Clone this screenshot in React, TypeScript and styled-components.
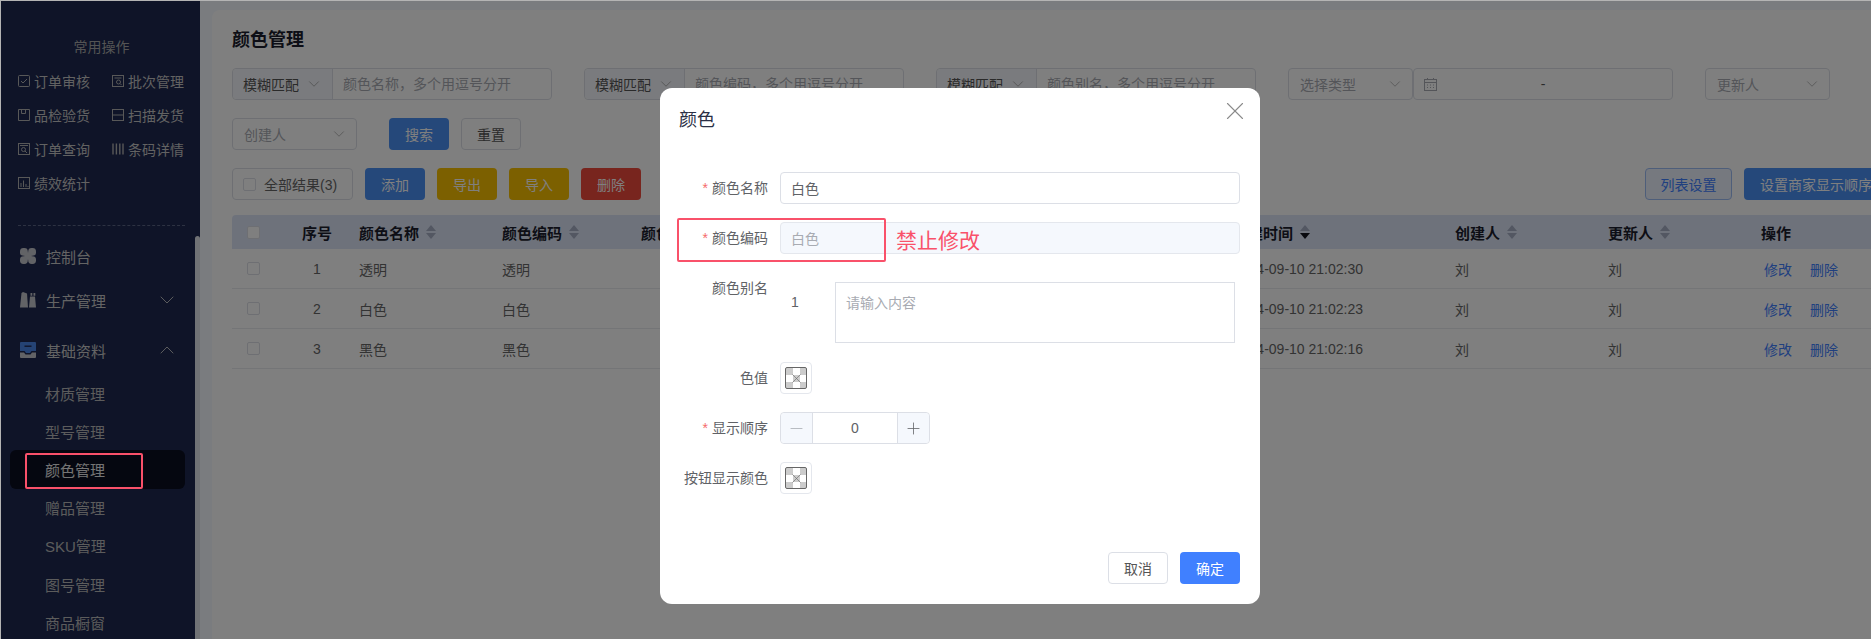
import React from "react";
import styled, { createGlobalStyle } from "styled-components";
import { ChevronDown, ChevronUp, Minus, Plus, X } from "lucide-react";

const GlobalStyle = createGlobalStyle`
  html, body { margin: 0; padding: 0; background: #fff; }
  body { font-family: "Liberation Sans", "Noto Sans CJK SC", sans-serif; font-size: 14px; }
  * { box-sizing: border-box; }
  input, textarea { font: inherit; }
`;

const Frame = styled.div`
  position: relative;
  width: 1871px;
  height: 639px;
  overflow: hidden;
  display: flex;
  background: #f4f8fe;
  &::after {
    content: "";
    position: absolute;
    inset: 0;
    border-top: 1px solid #b4b4b4;
    border-left: 1px solid #b4b4b4;
    z-index: 9;
    pointer-events: none;
  }
`;

/* ---------- sidebar ---------- */
const Sidebar = styled.aside`
  position: relative;
  flex: 0 0 200px;
  height: 639px;
  background: #1e2850;
  overflow: hidden;
  color: #c4c4c4;
`;
const ScrollThumb = styled.div`
  position: absolute;
  right: 0;
  top: 236px;
  bottom: 0;
  width: 5px;
  border-radius: 3px 3px 0 0;
  background: #e0e4ea;
`;
const QuickTitle = styled.div`
  margin: 37px 15px 0 18px;
  height: 20px;
  line-height: 20px;
  text-align: center;
  color: #a8a8a8;
`;
const QuickGrid = styled.div`
  margin: 7px 0 0 18px;
  display: grid;
  grid-template-columns: 94px 80px;
  grid-auto-rows: 34px;
`;
const QuickItem = styled.div`
  display: flex;
  align-items: center;
  gap: 4px;
  white-space: nowrap;
  color: #c4c4c4;
  svg { flex: 0 0 12px; }
`;
const Divider = styled.div`
  margin: 25px 15px 0 18px;
  border-top: 1px dashed #5a6484;
`;
const MenuItem = styled.div<{ $top: number }>`
  margin-top: ${(p) => p.$top}px;
  height: 44px;
  padding: 0 21px 0 20px;
  display: flex;
  align-items: center;
  font-size: 15px;
  color: #c8c8c8;
  svg.lead { margin-right: 10px; flex: 0 0 16px; }
  svg.arrow { margin-left: auto; color: #c8c8c8; }
`;
const SubMenu = styled.div`
  margin-top: 2px;
`;
const SubItem = styled.div<{ $active?: boolean }>`
  margin: 0 10px;
  width: 175px;
  height: 38.2px;
  padding-left: 35px;
  display: flex;
  align-items: center;
  font-size: 15px;
  border-radius: 6px;
  color: ${(p) => (p.$active ? "#e8e8e8" : "#b8b8b8")};
  background: ${(p) => (p.$active ? "#0a0e20" : "transparent")};
`;

/* ---------- main ---------- */
const Main = styled.main`
  flex: 1;
  min-width: 0;
  height: 639px;
  padding: 10px 0 0 12px;
`;
const Card = styled.section`
  height: 629px;
  background: #fff;
  border-radius: 8px 0 0 0;
  padding: 18px 0 0 20px;
  overflow: hidden;
`;
const PageTitle = styled.h1`
  margin: 0 0 16px;
  height: 24px;
  line-height: 24px;
  font-size: 18px;
  font-weight: 700;
  color: #1a1c2c;
`;
const FilterRow = styled.div`
  display: flex;
  height: 32px;
  margin-bottom: 18px;
  gap: 32px;
`;
const InputGroup = styled.div`
  flex: 0 0 320px;
  display: flex;
  height: 32px;
  border: 1px solid #dcdfe6;
  border-radius: 4px;
`;
const Prepend = styled.div`
  flex: 0 0 100px;
  padding: 0 9px 0 10px;
  display: flex;
  align-items: center;
  justify-content: space-between;
  background: #f5f7fc;
  border-right: 1px solid #dcdfe6;
  color: #555;
  border-radius: 4px 0 0 4px;
  svg { color: #999; }
`;
const GroupPlaceholder = styled.div`
  padding-left: 10px;
  line-height: 30px;
  color: #a8abb2;
`;
const Joined = styled.div`
  display: flex;
`;
const SelectBox = styled.div`
  width: 125px;
  height: 32px;
  padding: 0 8px 0 11px;
  display: flex;
  align-items: center;
  justify-content: space-between;
  border: 1px solid #dcdfe6;
  border-radius: 4px;
  color: #a8abb2;
  svg { color: #a0a0a0; }
`;
const DateBox = styled.div`
  position: relative;
  width: 260px;
  height: 32px;
  display: flex;
  align-items: center;
  justify-content: center;
  border: 1px solid #dcdfe6;
  border-radius: 4px;
  color: #555;
  svg { position: absolute; left: 10px; top: 9px; color: #a8abb2; }
`;
const ActionGap = styled.div`
  display: flex;
  gap: 12px;
`;
const Button = styled.button<{ $bg: string; $w?: number }>`
  width: ${(p) => (p.$w ? `${p.$w}px` : "60px")};
  flex: none;
  height: 32px;
  padding: 0;
  border: 0;
  border-radius: 4px;
  background: ${(p) => p.$bg};
  color: #fff;
  font: inherit;
  white-space: nowrap;
`;
const GhostButton = styled.button`
  width: 60px;
  height: 32px;
  padding: 0;
  background: #fff;
  border: 1px solid #dcdfe6;
  border-radius: 4px;
  color: #555;
  font: inherit;
`;
const OutlineButton = styled.button`
  width: 87px;
  height: 32px;
  padding: 0;
  background: #ecf3ff;
  border: 1px solid #9dbcf5;
  border-radius: 4px;
  color: #4080ff;
  font: inherit;
  flex: none;
`;
const Toolbar = styled.div`
  width: 1656px;
  height: 32px;
  display: flex;
  align-items: center;
  gap: 12px;
`;
const ToolRight = styled.div`
  margin-left: auto;
  display: flex;
  gap: 12px;
`;
const SelectAll = styled.div`
  width: 121px;
  height: 32px;
  display: flex;
  align-items: center;
  gap: 8px;
  padding-left: 10px;
  border: 1px solid #dcdfe6;
  border-radius: 4px;
  color: #666;
  white-space: nowrap;
`;
const Check = styled.span`
  display: inline-block;
  width: 13px;
  height: 13px;
  border: 1px solid #dcdfe6;
  border-radius: 2px;
  background: #fff;
  flex: none;
`;
const Table = styled.div`
  margin-top: 15px;
  width: 1700px;
`;
const columns = "55px 60px 143px 139px 592px 222px 153px 153px 183px";
const HeadRow = styled.div`
  display: grid;
  grid-template-columns: ${columns};
  height: 34px;
  background: #dde5f6;
  align-items: center;
  font-size: 15px;
  font-weight: 700;
  color: #1a1c2c;
  border-radius: 4px 0 0 0;
`;
const Row = styled.div`
  display: grid;
  grid-template-columns: ${columns};
  height: 40px;
  align-items: center;
  border-bottom: 1px solid #e8eaef;
  color: #666;
`;
const Cell = styled.div<{ $center?: boolean }>`
  padding-left: ${(p) => (p.$center ? 0 : 12)}px;
  text-align: ${(p) => (p.$center ? "center" : "left")};
  display: flex;
  align-items: center;
  justify-content: ${(p) => (p.$center ? "center" : "flex-start")};
  white-space: nowrap;
`;
const CheckCell = styled.div`
  padding-left: 15px;
  display: flex;
`;
const SortIcon = styled.svg`
  margin-left: 7px;
  flex: none;
`;
const LinkGroup = styled.div`
  display: flex;
  gap: 18px;
  padding-left: 3px;
  color: #4080ff;
`;

/* ---------- dialog ---------- */
const Overlay = styled.div`
  position: absolute;
  inset: 0;
  z-index: 5;
  background: rgba(0, 0, 0, 0.5);
  padding: 88px 0 0 660px;
`;
const Dialog = styled.div`
  width: 600px;
  height: 516px;
  background: #fff;
  border-radius: 12px;
  display: flex;
  flex-direction: column;
`;
const DialogHeader = styled.div`
  height: 84px;
  padding: 20px 19px 0;
  display: flex;
  justify-content: space-between;
`;
const DialogTitle = styled.div`
  font-size: 18px;
  line-height: 24px;
  color: #2a2f45;
`;
const CloseIcon = styled(X)`
  margin: -12px -9px 0 0;
  color: #8a8a8a;
`;
const FormRow = styled.div<{ $tall?: boolean }>`
  display: grid;
  grid-template-columns: 108px 1fr;
  column-gap: 12px;
  padding-right: 20px;
  min-height: ${(p) => (p.$tall ? 72 : 32)}px;
  margin-bottom: 18px;
`;
const Label = styled.label`
  height: 32px;
  line-height: 32px;
  text-align: right;
  color: #606266;
  white-space: nowrap;
`;
const Star = styled.span`
  color: #f56c6c;
  margin-right: 4px;
`;
const TextInput = styled.input`
  width: 100%;
  height: 32px;
  padding: 0 10px;
  border: 1px solid #dcdfe6;
  border-radius: 4px;
  color: #606266;
  outline: none;
  &:disabled {
    background: #f5f8fd;
    color: #a8abb2;
    border-color: #e4e7ed;
  }
`;
const AliasWrap = styled.div`
  display: flex;
  padding-top: 10px;
`;
const AliasIndex = styled.div`
  width: 55px;
  padding: 10px 0 0 11px;
  line-height: 20px;
  color: #606266;
`;
const AliasArea = styled.textarea`
  width: 400px;
  height: 61px;
  padding: 10px 10px;
  border: 1px solid #dcdfe6;
  border-radius: 0;
  line-height: 20px;
  resize: none;
  outline: none;
  &::placeholder { color: #a8abb2; }
`;
const Swatch = styled.div`
  width: 32px;
  height: 32px;
  padding: 4px;
  border: 1px solid #e4e7ed;
  border-radius: 4px;
`;
const SwatchInner = styled.div`
  width: 22px;
  height: 22px;
  border: 1px solid #666;
  border-radius: 2px;
  display: flex;
  align-items: center;
  justify-content: center;
  color: #666;
  background: conic-gradient(#ccc 25%, #fff 0 50%, #ccc 0 75%, #fff 0) 7px 0 / 14px 14px;
`;
const NumberBox = styled.div`
  width: 150px;
  height: 32px;
  display: flex;
  border: 1px solid #dcdfe6;
  border-radius: 4px;
  color: #606266;
`;
const Stepper = styled.div<{ $side: "l" | "r"; $muted?: boolean }>`
  flex: 0 0 32px;
  display: flex;
  align-items: center;
  justify-content: center;
  background: #f5f8fd;
  color: ${(p) => (p.$muted ? "#a8abb2" : "#606266")};
  border-${(p) => (p.$side === "l" ? "right" : "left")}: 1px solid #dcdfe6;
  border-radius: ${(p) => (p.$side === "l" ? "4px 0 0 4px" : "0 4px 4px 0")};
`;
const NumberValue = styled.div`
  flex: 1;
  text-align: center;
  line-height: 30px;
`;
const DialogFooter = styled.div`
  margin-top: auto;
  padding: 0 20px 20px;
  display: flex;
  justify-content: flex-end;
  gap: 12px;
`;

/* ---------- annotations ---------- */
const MenuMark = styled.div`
  position: absolute;
  left: 25px;
  top: 453px;
  width: 118px;
  height: 36px;
  border: 2px solid #f9516a;
  border-radius: 2px;
  z-index: 7;
`;
const FieldMark = styled.div`
  position: absolute;
  left: 677px;
  top: 218px;
  width: 209px;
  height: 44px;
  border: 2px solid #f9516a;
  border-radius: 2px;
  z-index: 7;
`;
const MarkNote = styled.div`
  position: absolute;
  left: 896px;
  top: 225px;
  font-size: 21px;
  line-height: 32px;
  color: #f9516a;
  z-index: 7;
`;

/* ---------- icons ---------- */
const ic = { width: 12, height: 12, viewBox: "0 0 12 12", fill: "none", stroke: "#b0b0b0", strokeWidth: 1 } as const;
const IconCheck = () => (
  <svg {...ic}><rect x=".5" y=".5" width="11" height="11" rx="1" /><path d="M3 6l2 2 4-4" /></svg>
);
const IconBatch = () => (
  <svg {...ic}><rect x=".5" y=".5" width="11" height="11" /><path d="M2.500 3h7" /><circle cx="6.500" cy="7" r="2" /><path d="M8 8.500l1.500 1.500" /></svg>
);
const IconBox = () => (
  <svg {...ic}><path d="M.5.500v11h11V.500zM3.500.500v4h4v-4" /></svg>
);
const IconScan = () => (
  <svg {...ic}><rect x=".5" y=".5" width="11" height="11" /><path d="M0 6h12" /></svg>
);
const IconQuery = () => (
  <svg {...ic}><rect x=".5" y=".5" width="11" height="11" /><path d="M2 2.500h8" /><circle cx="5.500" cy="6.500" r="2" /><path d="M7 8l2 2" /></svg>
);
const IconBars = () => (
  <svg {...ic} strokeWidth={1.4}><path d="M1 .5v11M4.400 .5v11M7.800 .5v11M11 .5v11" /></svg>
);
const IconStats = () => (
  <svg {...ic}><rect x=".5" y=".5" width="11" height="11" /><path d="M3 10V6M5.500 10V3.500M8 10V7M10 10V9" /></svg>
);
const IconClover = () => (
  <svg className="lead" width="16" height="16" viewBox="0 0 16 16" fill="#c4c6cc">
    <rect x="0" y="0" width="7.800" height="7.800" rx="3.400" />
    <rect x="8.200" y="0" width="7.800" height="7.800" rx="3.400" />
    <rect x="0" y="8.200" width="7.800" height="7.800" rx="3.400" />
    <rect x="8.200" y="8.200" width="7.800" height="7.800" rx="3.400" />
    <rect x="5" y="5" width="6" height="6" transform="rotate(45 8 8)" />
  </svg>
);
const IconBooks = () => (
  <svg className="lead" width="16" height="16" viewBox="0 0 16 16" fill="#c4c6cc">
    <path d="M0 15.500L1.500 1 3 0l4 1.500 1 14z" />
    <path d="M9 15.500L10 4.500h5l1 11zM10.500 3.800V1h1.800v2.800zM13.500 3.800V1h1.800v2.800z" />
  </svg>
);
const IconTray = () => (
  <svg className="lead" width="16" height="16" viewBox="0 0 16 16">
    <path d="M1 0h14a1 1 0 011 1v8h-4.500L10 11H6L4.500 9H0V1a1 1 0 011-1z" fill="#4a86e8" />
    <rect x="4.500" y="3.500" width="7" height="1.400" fill="#1e2850" />
    <path d="M0 10.500h4l1.500 2h5l1.500-2h4V15a1 1 0 01-1 1H1a1 1 0 01-1-1z" fill="#c4c6cc" />
  </svg>
);
const IconCalendar = () => (
  <svg width="13" height="13" viewBox="0 0 13 13" fill="none" stroke="currentColor">
    <rect x=".5" y="1.500" width="12" height="11" />
    <path d="M.5 4.500h12M3.500 0v2M9.500 0v2M3 7h1M6 7h1M9 7h1M3 9.500h1M6 9.500h1M9 9.500h1" />
  </svg>
);
const Sort = ({ active }: { active?: boolean }) => (
  <SortIcon width="10" height="14" viewBox="0 0 10 14">
    <path d="M5 0l5 6H0z" fill="#a6aec4" />
    <path d="M5 14l5-6H0z" fill={active ? "#12141f" : "#a6aec4"} />
  </SortIcon>
);

const quick: [React.ReactNode, string][] = [
  [<IconCheck />, "订单审核"],
  [<IconBatch />, "批次管理"],
  [<IconBox />, "品检验货"],
  [<IconScan />, "扫描发货"],
  [<IconQuery />, "订单查询"],
  [<IconBars />, "条码详情"],
  [<IconStats />, "绩效统计"],
];
const subs = ["材质管理", "型号管理", "颜色管理", "赠品管理", "SKU管理", "图号管理", "商品橱窗"];
const rows = [
  ["1", "透明", "2024-09-10 21:02:30"],
  ["2", "白色", "2024-09-10 21:02:23"],
  ["3", "黑色", "2024-09-10 21:02:16"],
];
const chevron = { size: 18, strokeWidth: 1 };

const SwatchControl = () => (
  <Swatch>
    <SwatchInner><X size={15} strokeWidth={1} /></SwatchInner>
  </Swatch>
);

export default function App() {
  return (
    <Frame>
      <GlobalStyle />
      <Sidebar>
        <QuickTitle>常用操作</QuickTitle>
        <QuickGrid>
          {quick.map(([icon, text]) => (
            <QuickItem key={text}>{icon}{text}</QuickItem>
          ))}
        </QuickGrid>
        <Divider />
        <MenuItem $top={8}><IconClover />控制台</MenuItem>
        <MenuItem $top={0}><IconBooks />生产管理<ChevronDown className="arrow" size={24} strokeWidth={0.9} /></MenuItem>
        <MenuItem $top={6}><IconTray />基础资料<ChevronUp className="arrow" size={24} strokeWidth={0.9} /></MenuItem>
        <SubMenu>
          {subs.map((s) => (
            <SubItem key={s} $active={s === "颜色管理"}>{s}</SubItem>
          ))}
        </SubMenu>
        <ScrollThumb />
      </Sidebar>
      <Main>
        <Card>
          <PageTitle>颜色管理</PageTitle>
          <FilterRow>
            {["颜色名称", "颜色编码", "颜色别名"].map((n) => (
              <InputGroup key={n}>
                <Prepend>模糊匹配<ChevronDown {...chevron} /></Prepend>
                <GroupPlaceholder>{n}，多个用逗号分开</GroupPlaceholder>
              </InputGroup>
            ))}
            <Joined>
              <SelectBox>选择类型<ChevronDown {...chevron} /></SelectBox>
              <DateBox><IconCalendar />-</DateBox>
            </Joined>
            <SelectBox>更新人<ChevronDown {...chevron} /></SelectBox>
          </FilterRow>
          <FilterRow>
            <SelectBox>创建人<ChevronDown {...chevron} /></SelectBox>
            <ActionGap>
              <Button $bg="#4a90f5">搜索</Button>
              <GhostButton>重置</GhostButton>
            </ActionGap>
          </FilterRow>
          <Toolbar>
            <SelectAll><Check />全部结果(3)</SelectAll>
            <Button $bg="#4a90f5">添加</Button>
            <Button $bg="#f8c000">导出</Button>
            <Button $bg="#f8c000">导入</Button>
            <Button $bg="#f04a3c">删除</Button>
            <ToolRight>
              <OutlineButton>列表设置</OutlineButton>
              <Button $bg="#4a90f5" $w={144}>设置商家显示顺序</Button>
            </ToolRight>
          </Toolbar>
          <Table>
            <HeadRow>
              <CheckCell><Check /></CheckCell>
              <Cell $center>序号</Cell>
              <Cell>颜色名称<Sort /></Cell>
              <Cell>颜色编码<Sort /></Cell>
              <Cell>颜色别名</Cell>
              <Cell>创建时间<Sort active /></Cell>
              <Cell>创建人<Sort /></Cell>
              <Cell>更新人<Sort /></Cell>
              <Cell>操作</Cell>
            </HeadRow>
            {rows.map(([n, name, time]) => (
              <Row key={n}>
                <CheckCell><Check /></CheckCell>
                <Cell $center>{n}</Cell>
                <Cell>{name}</Cell>
                <Cell>{name}</Cell>
                <Cell />
                <Cell>{time}</Cell>
                <Cell>刘</Cell>
                <Cell>刘</Cell>
                <Cell><LinkGroup><span>修改</span><span>删除</span></LinkGroup></Cell>
              </Row>
            ))}
          </Table>
        </Card>
      </Main>
      <Overlay>
        <Dialog>
          <DialogHeader>
            <DialogTitle>颜色</DialogTitle>
            <CloseIcon size={30} strokeWidth={0.9} />
          </DialogHeader>
          <FormRow>
            <Label><Star>*</Star>颜色名称</Label>
            <TextInput defaultValue="白色" />
          </FormRow>
          <FormRow>
            <Label><Star>*</Star>颜色编码</Label>
            <TextInput defaultValue="白色" disabled />
          </FormRow>
          <FormRow $tall>
            <Label>颜色别名</Label>
            <AliasWrap>
              <AliasIndex>1</AliasIndex>
              <AliasArea placeholder="请输入内容" />
            </AliasWrap>
          </FormRow>
          <FormRow>
            <Label>色值</Label>
            <SwatchControl />
          </FormRow>
          <FormRow>
            <Label><Star>*</Star>显示顺序</Label>
            <NumberBox>
              <Stepper $side="l" $muted><Minus size={19} strokeWidth={1} /></Stepper>
              <NumberValue>0</NumberValue>
              <Stepper $side="r"><Plus size={19} strokeWidth={1} /></Stepper>
            </NumberBox>
          </FormRow>
          <FormRow>
            <Label>按钮显示颜色</Label>
            <SwatchControl />
          </FormRow>
          <DialogFooter>
            <GhostButton>取消</GhostButton>
            <Button $bg="#4080ff">确定</Button>
          </DialogFooter>
        </Dialog>
      </Overlay>
      <MenuMark />
      <FieldMark />
      <MarkNote>禁止修改</MarkNote>
    </Frame>
  );
}
